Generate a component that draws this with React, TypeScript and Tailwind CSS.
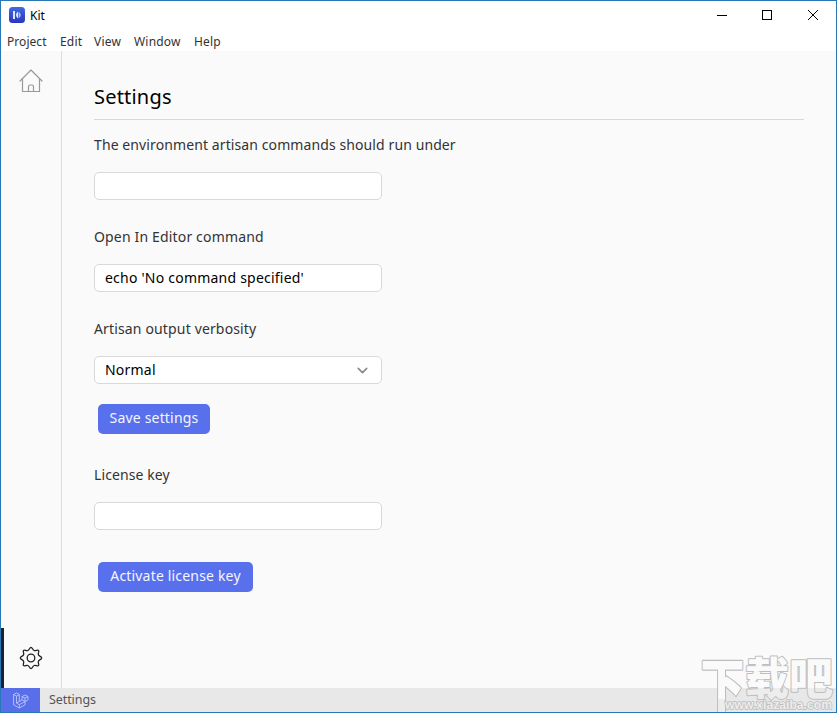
import React from "react";
import { ChevronDown } from "lucide-react";

type FieldProps = {
  label: string;
  className?: string;
  value?: string;
  select?: boolean;
};

const Menu: React.FC = () => (
  <nav className="flex h-[22px] shrink-0 items-center bg-white pt-[3px] pl-[6px] text-[12px] leading-[18px] tracking-[0.2px] text-[#333333]">
    <span className="w-[53px] tracking-[0.05px]">Project</span>
    <span className="w-[34px]">Edit</span>
    <span className="w-[40px]">View</span>
    <span className="w-[60px]">Window</span>
    <span>Help</span>
  </nav>
);

const TitleBar: React.FC = () => (
  <header className="flex h-[28px] shrink-0 items-center bg-white pl-2 text-[12px] text-black">
    <svg width="16" height="16" viewBox="0 0 16 16">
      <defs>
        <linearGradient id="kit" x1="0" y1="0" x2="0" y2="1">
          <stop offset="0" stopColor="#3f6be0" />
          <stop offset="1" stopColor="#2c35bd" />
        </linearGradient>
      </defs>
      <rect width="16" height="16" rx="3.5" fill="url(#kit)" />
      <path d="M4 4h2v8H4z" fill="#dce5ff" />
      <path d="M9 4.500v7Q5 8 9 4.500z" fill="#e6edff" />
      <path d="M9.600 4.500q4.400 3.500 0 7z" fill="#a9bcfa" />
    </svg>
    <span className="ml-[5px] flex-1 pt-px">Kit</span>
    <svg width="104" height="12" viewBox="0 0 104 12" fill="none" stroke="#000" className="mr-[16px]" shapeRendering="crispEdges">
      <path d="M1 6.5h10" />
      <path d="M46.5 1.5h9v9h-9z" />
      <path d="M92 1l10 10M102 1L92 11" shapeRendering="auto" />
    </svg>
  </header>
);

const Field: React.FC<FieldProps> = ({ label, className = "tracking-[0.1px]", value = "", select }) => (
  <div className="flex flex-col">
    <label className={`h-5 text-[14px] leading-5 whitespace-nowrap text-[#333333] ${className}`}>{label}</label>
    <div className="mt-[17px] flex h-[28px] w-[288px] items-center justify-between rounded-[5px] border border-[#d9d9d9] bg-white px-[10px] text-[14px] leading-5 tracking-[0.22px] text-black">
      <span>{value}</span>
      {select && <ChevronDown size={17} strokeWidth={2.2} className="text-[#888888]" />}
    </div>
  </div>
);

const Button: React.FC<{ children: React.ReactNode; className: string }> = ({ children, className }) => (
  <button className={`ml-1 flex h-[30px] justify-center rounded-[5px] bg-[#5970ed] pt-[4px] text-[14px] leading-5 tracking-[0.18px] whitespace-nowrap text-[#f4f6ff] ${className}`}>
    {children}
  </button>
);

const Sidebar: React.FC = () => (
  <aside className="flex w-[61px] shrink-0 flex-col justify-between border-r border-[#dddddd]">
    <svg width="24" height="26" viewBox="0 0 24 26" fill="none" stroke="#999999" strokeWidth="1.2" className="mt-[17px] ml-[18px]">
      <path d="M1 13L12 2l11 11" strokeLinecap="round" strokeLinejoin="round" />
      <path d="M3.500 11v12.500h17V11" strokeLinejoin="round" />
      <path d="M9.500 23.500v-5q0-1.500 1.500-1.500h2q1.500 0 1.500 1.500v5" />
    </svg>
    <div className="flex h-[60px] items-center border-l-[3px] border-[#142334] pl-[15px]">
      <svg width="24" height="24" viewBox="0 0 24 24" fill="none" stroke="#222222" strokeWidth="1.3" strokeLinejoin="round">
        <circle cx="12" cy="12" r="3.8" />
        <path d="M12 1.300c1.400 0 1.500 2.600 3.100 3.200 1.600.7 3.400-1.100 4.400-.1s-.8 2.800-.1 4.400c.6 1.600 3.300 1.700 3.300 3.200s-2.700 1.600-3.300 3.200c-.7 1.600 1.100 3.400.1 4.400s-2.800-.8-4.400-.1c-1.600.6-1.700 3.200-3.100 3.200s-1.500-2.600-3.100-3.200c-1.600-.7-3.400 1.100-4.400.1s.8-2.800.1-4.400C4 13.600 1.300 13.500 1.300 12S4 10.400 4.600 8.800c.7-1.600-1.100-3.400-.1-4.400s2.800.8 4.400.1C10.500 3.900 10.600 1.300 12 1.300z" />
      </svg>
    </div>
  </aside>
);

const Footer: React.FC = () => (
  <footer className="flex h-6 shrink-0 items-center bg-[#e8e8e8] text-[12.5px] text-[#555555]">
    <div className="flex h-full w-[39px] items-center justify-center bg-[#596fea]">
      <svg width="16" height="17" viewBox="0 0 16 17" fill="none" stroke="#c6cfff" strokeWidth="0.8" strokeLinejoin="round">
        <path d="M.6 2.500L3.500 1l2.800 1.500v7l2.800-1.600V4.500L12 3l3 1.500v3.300l-3 1.700v3.300L6.300 16 .6 12.800z" />
        <path d="M.6 2.500l2.900 1.600 2.800-1.600M3.500 4.100v7l2.800 1.600V16M3.500 11.100l2.800-1.600M6.300 12.700L12 9.500M9.100 4.500L12 6.100l3-1.600M12 6.100v3.400L9.100 7.900" />
      </svg>
    </div>
    <span className="ml-[9px] tracking-[-0.08px]">Settings</span>
  </footer>
);

// Fill switches tone where the mark crosses the status bar.
const Watermark: React.FC = () => (
  <svg width="137" height="60" viewBox="0 0 137 60" className="absolute right-0 bottom-0" stroke="#bdbdbd" strokeLinejoin="round" paintOrder="stroke">
    <defs>
      <linearGradient id="mark" gradientUnits="userSpaceOnUse" x1="0" y1="0" x2="0" y2="72">
        <stop offset="0.5" stopColor="#fafafa" />
        <stop offset="0.5" stopColor="#ededed" />
      </linearGradient>
    </defs>
    <g fill="url(#mark)" fontSize="44" fontWeight="900" strokeWidth="2" className="font-['Noto_Sans_CJK_SC',sans-serif]">
      <text transform="translate(1.500 0) scale(1 1.300)" x="0" y="41.500">下</text>
      <text x="46" y="43">载</text>
      <text x="90" y="43">吧</text>
    </g>
    <text x="26" y="57" fontSize="13" fontWeight="700" textLength="107" lengthAdjust="spacingAndGlyphs" strokeWidth="1.6" fill="#ededed" className="font-['Liberation_Sans',sans-serif]">
      www.xiazaiba.com
    </text>
  </svg>
);

export default function App() {
  return (
    <div className="relative flex h-[713px] w-[837px] flex-col overflow-hidden border border-[#2878b5] bg-[#fafafa] font-['Noto_Sans',sans-serif]">
      <TitleBar />
      <Menu />
      <div className="flex min-h-0 flex-1">
        <Sidebar />
        <main className="flex flex-1 flex-col items-start pr-8 pl-8">
          <h1 className="h-[69px] w-full border-b border-[#d8d8d8] pt-[30px] text-[20px] leading-8 tracking-[0.2px] text-black">Settings</h1>
          <div className="mt-[15px] flex flex-col gap-[27px]">
            <Field label="The environment artisan commands should run under" />
            <Field label="Open In Editor command" className="tracking-[0.16px]" value="echo 'No command specified'" />
            <Field label="Artisan output verbosity" className="tracking-[0.15px]" value="Normal" select />
          </div>
          <Button className="mt-5 w-[112px]">Save settings</Button>
          <div className="mt-[31px]">
            <Field label="License key" />
          </div>
          <Button className="mt-8 w-[155px]">Activate license key</Button>
        </main>
      </div>
      <Footer />
      <Watermark />
    </div>
  );
}
